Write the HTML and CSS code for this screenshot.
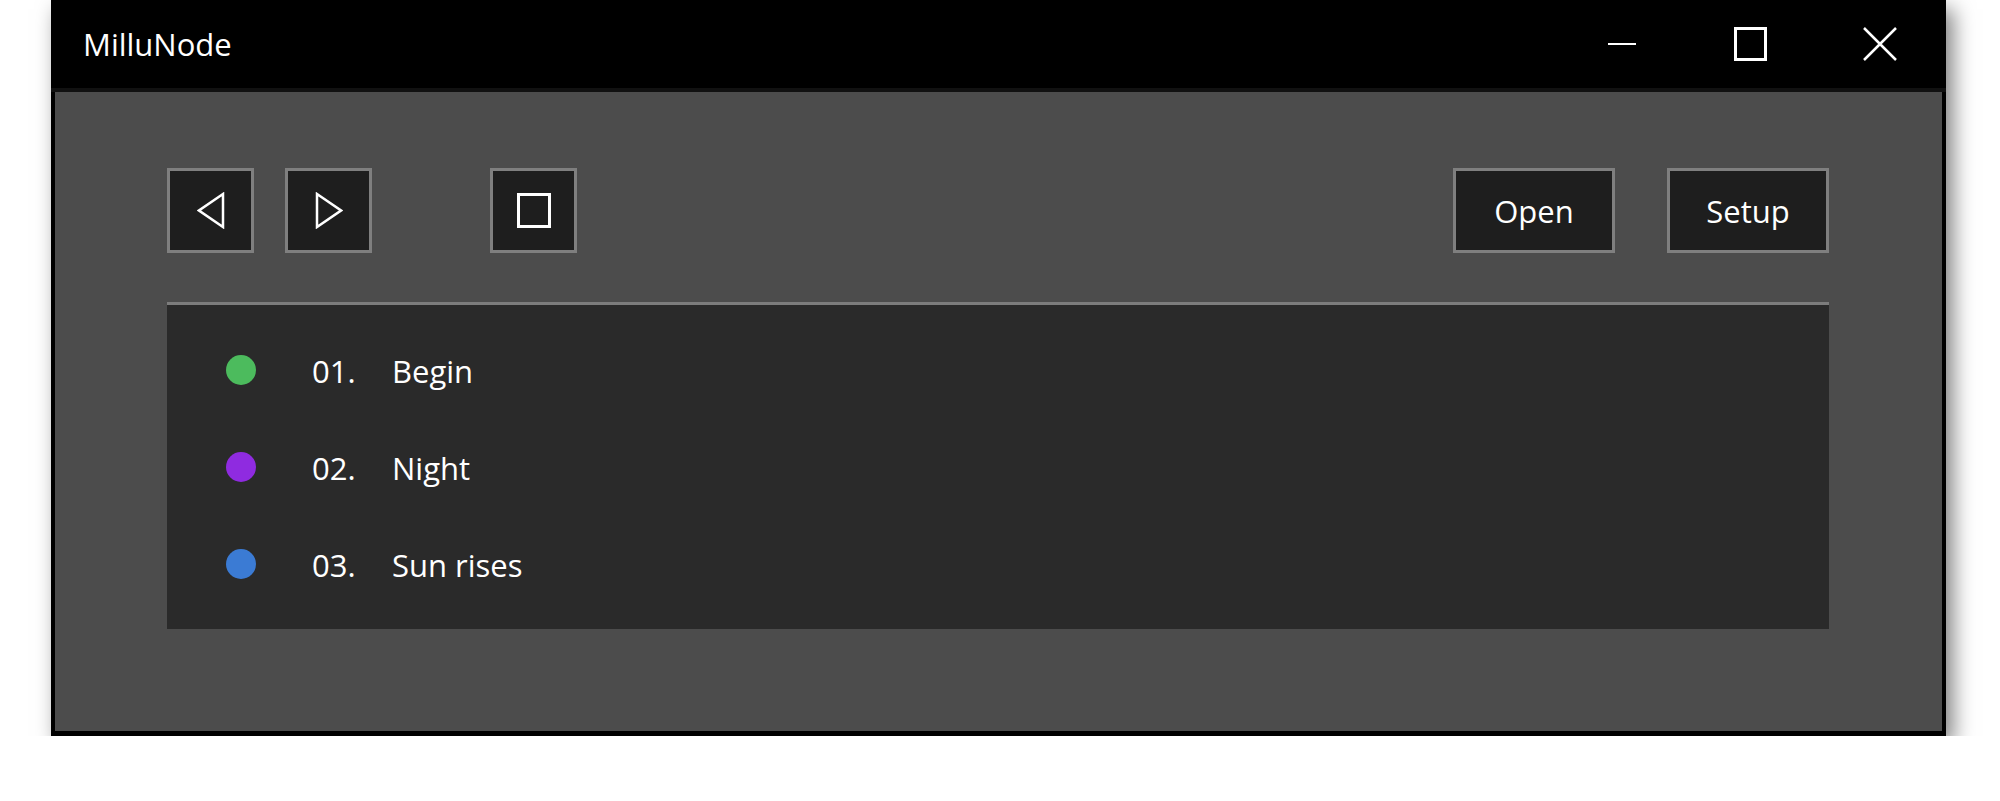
FILE: index.html
```html
<!DOCTYPE html>
<html lang="en">
<head>
  <meta charset="UTF-8" />
  <meta name="viewport" content="width=device-width, initial-scale=1.0"/>
  <title>MilluNode</title>
  <link rel="stylesheet" href="styles.css">
</head>
<body>
  <div class="window">
    <div class="titlebar">
      <span class="title">MilluNode</span>
      <div class="caption">
        <button class="caption-btn" title="Minimize">
          <svg width="28" height="4" viewBox="0 0 28 4"><line x1="0" y1="2" x2="28" y2="2" stroke="#fff" stroke-width="2"/></svg>
        </button>
        <button class="caption-btn" title="Maximize">
          <svg width="33" height="34" viewBox="0 0 33 34"><rect x="1.5" y="1.5" width="30" height="31" fill="none" stroke="#fff" stroke-width="3"/></svg>
        </button>
        <button class="caption-btn close" title="Close">
          <svg width="34" height="34" viewBox="0 0 34 34"><path d="M1 1 L33 33 M33 1 L1 33" stroke="#fff" stroke-width="2.5"/></svg>
        </button>
      </div>
    </div>

    <div class="content">
      <div class="toolbar">
        <button class="tool icon-btn" id="prevBtn">
          <svg width="28" height="37" viewBox="0 0 28 37"><polygon points="26,2 2,18.5 26,35" fill="none" stroke="#fff" stroke-width="2.5" stroke-linejoin="miter"/></svg>
        </button>
        <button class="tool icon-btn" id="nextBtn">
          <svg width="28" height="37" viewBox="0 0 28 37"><polygon points="2,2 26,18.5 2,35" fill="none" stroke="#fff" stroke-width="2.5" stroke-linejoin="miter"/></svg>
        </button>
        <button class="tool icon-btn stop" id="stopBtn">
          <svg width="34" height="35" viewBox="0 0 34 35"><rect x="1.5" y="1.5" width="31" height="32" fill="none" stroke="#fff" stroke-width="3"/></svg>
        </button>
        <div class="spacer"></div>
        <button class="tool text-btn">Open</button>
        <button class="tool text-btn">Setup</button>
      </div>

      <ul class="cues">
        <li class="cue"><span class="dot green"></span><span class="num">01.</span><span class="name">Begin</span></li>
        <li class="cue"><span class="dot purple"></span><span class="num">02.</span><span class="name">Night</span></li>
        <li class="cue"><span class="dot blue"></span><span class="num">03.</span><span class="name">Sun rises</span></li>
      </ul>
    </div>
  </div>
</body>
</html>
```

FILE: styles.css
```css
body {
  margin: 0;
  background-color: #fff;
  font-family: "Open Sans", "Noto Sans", sans-serif;
  color: #fff;
}

.window {
  margin-left: 51px;
  width: 1895px;
  height: 736px;
  display: flex;
  flex-direction: column;
  background-color: #000;
  box-shadow: 7px 9px 20px rgba(0, 0, 0, 0.5);
}

.titlebar {
  height: 88px;
  display: flex;
  align-items: center;
  border-bottom: 4px solid #111;
}

.title {
  padding-left: 32px;
  font-size: 31px;
  flex: 1;
}

.caption {
  display: flex;
  height: 100%;
}

.caption-btn {
  width: 128px;
  height: 100%;
  background: none;
  border: none;
  padding: 0;
  display: flex;
  align-items: center;
  justify-content: center;
}

.caption-btn.close {
  width: 132px;
}

.content {
  flex: 1;
  margin: 0 4px 5px;
  background-color: #4c4c4c;
  padding: 76px 113px 0 112px;
}

.toolbar {
  display: flex;
  align-items: center;
  gap: 31px;
}

.tool {
  height: 85px;
  background-color: #1e1e1e;
  border: 3px solid #7f7f7f;
  color: #fff;
  font-family: inherit;
  font-size: 31px;
  padding: 0;
  display: flex;
  align-items: center;
  justify-content: center;
  box-sizing: border-box;
}

.icon-btn {
  width: 87px;
}

.stop {
  margin-left: 87px;
}

.spacer {
  flex: 1;
}

.text-btn {
  width: 162px;
}

.text-btn + .text-btn {
  margin-left: 21px;
}

.cues {
  list-style: none;
  margin: 49px 0 0;
  padding: 17px 0 16px;
  background-color: #2a2a2a;
  border-top: 3px solid #7c7c7c;
}

.cue {
  height: 97px;
  display: flex;
  align-items: center;
  padding-left: 59px;
  font-size: 31px;
}

.dot {
  width: 30px;
  height: 30px;
  border-radius: 50%;
  margin-right: 56px;
  margin-top: -1px;
}

.green { background-color: #4cbb5d; }
.purple { background-color: #8f2be0; }
.blue { background-color: #3b7bd4; }

.num {
  width: 80px;
}
```
